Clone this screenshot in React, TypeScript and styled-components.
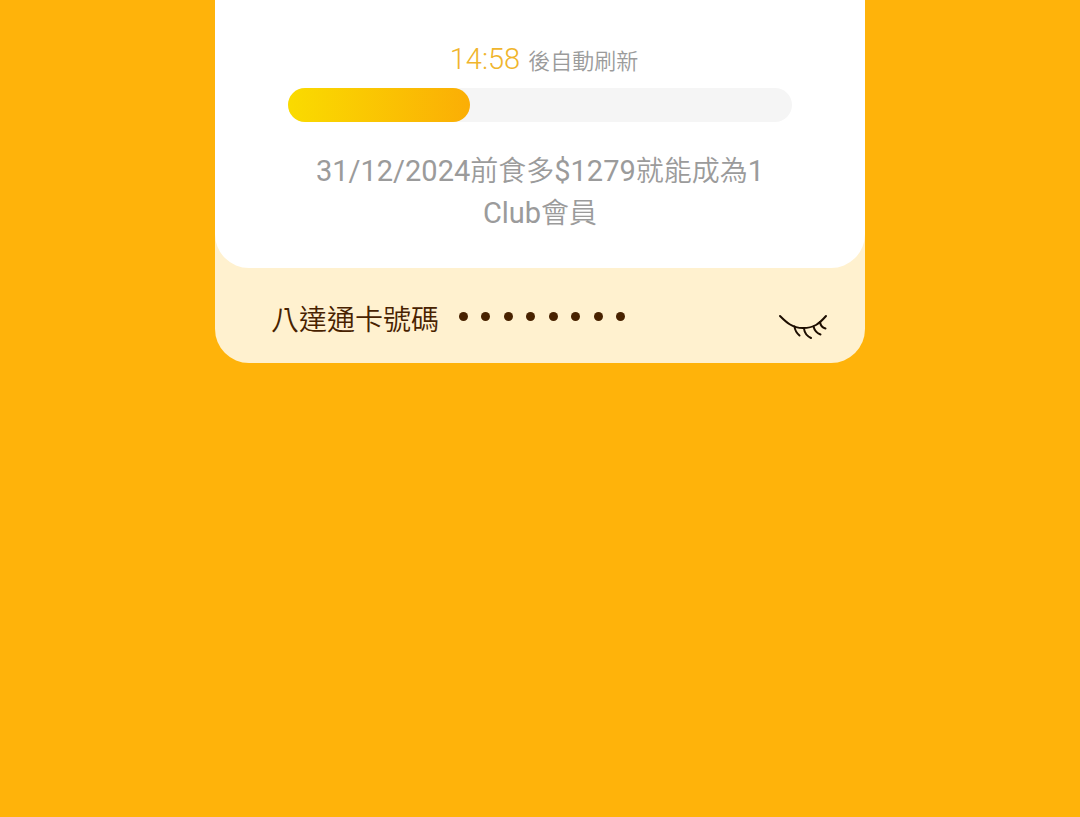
import React, { useState } from 'react';
import styled, { createGlobalStyle } from 'styled-components';

const GlobalStyle = createGlobalStyle`
  * { box-sizing: border-box; }
  body {
    margin: 0;
    background: #ffb30a;
    font-family: Roboto, "Noto Sans CJK TC", sans-serif;
    font-weight: 400;
  }
`;

const Page = styled.main`
  display: flex;
  justify-content: center;
  align-items: flex-start;
  min-height: 100vh;
`;

const Card = styled.section`
  width: 60.2%;
  min-width: 560px;
  overflow: hidden;
  background: #fff1cf;
  border-radius: 0 0 34px 34px;
`;

const Status = styled.div`
  display: flex;
  flex-direction: column;
  padding: 39px 73px 36px;
  background: #ffffff;
  border-radius: 0 0 34px 34px;
`;

const Countdown = styled.p`
  display: flex;
  justify-content: center;
  align-items: baseline;
  gap: 8px;
  margin: 0 0 9px;
  padding-left: 8px;
  line-height: 40px;
`;

const Time = styled.time`
  color: #f0b52c;
  font-size: 29px;
  font-weight: 300;
`;

const Refresh = styled.span`
  color: #9b9b9b;
  font-family: "Noto Sans CJK TC", sans-serif;
  font-size: 22px;
  font-weight: 350;
  line-height: 32px;
`;

const Track = styled.div`
  height: 34px;
  border-radius: 17px;
  background: #f5f5f5;
`;

const Fill = styled.div`
  height: 100%;
  border-radius: 17px;
  background: linear-gradient(90deg, #fadb00, #fbae05);
`;

const Notice = styled.p`
  margin: 26px 0 0;
  color: #9b9b9b;
  font-family: "Noto Sans CJK TC", sans-serif;
  font-size: 28px;
  font-weight: 350;
  line-height: 42px;
  text-align: center;
`;

const Latin = styled.span`
  font-family: Roboto, sans-serif;
  font-size: 29px;
  font-weight: 400;
  line-height: 28px;
`;

const NumberRow = styled.div`
  display: flex;
  align-items: center;
  height: 95px;
  padding: 4px 33px 0 56px;
  color: #482200;
`;

const Label = styled.span`
  font-family: "Noto Sans CJK TC", sans-serif;
  font-size: 28px;
  font-weight: 350;
  line-height: 40px;
`;

const Mask = styled.span`
  display: grid;
  grid-template-columns: repeat(8, 1fr);
  justify-items: center;
  width: 180px;
  margin: 0 auto 3px 13px;
`;

const Dot = styled.i`
  width: 9px;
  height: 9px;
  border-radius: 50%;
  background: #482200;
`;

const EyeButton = styled.button`
  display: flex;
  padding: 19px 4px 0;
  border: 0;
  background: none;
  cursor: pointer;
`;

export default function App() {
  const [progress] = useState(36.1);

  return (
    <>
      <GlobalStyle />
      <Page>
        <Card>
          <Status>
            <Countdown>
              <Time>14:58</Time>
              <Refresh>後自動刷新</Refresh>
            </Countdown>
            <Track
              role="progressbar"
              aria-label="自動刷新"
              aria-valuenow={progress}
              aria-valuemin={0}
              aria-valuemax={100}
            >
              <Fill style={{ width: `${progress}%` }} />
            </Track>
            <Notice>
              <Latin>31/12/2024</Latin>前食多<Latin>$1279</Latin>就能成為<Latin>1</Latin>
              <br />
              <Latin>Club</Latin>會員
            </Notice>
          </Status>
          <NumberRow>
            <Label>八達通卡號碼</Label>
            <Mask>
              {Array.from({ length: 8 }, (_, i) => (
                <Dot key={i} />
              ))}
            </Mask>
            <EyeButton type="button" aria-label="顯示號碼">
              <svg width="50" height="26" viewBox="0 0 50 26" fill="none" stroke="#1c0d00" strokeWidth="2" strokeLinecap="round">
                <path d="M2 2C8 8 14 14 25 14S41 10 48 2" />
                <path d="M16.500 12.500C17 17 18.500 19 21.500 21.500" />
                <path d="M26 14.500C26.500 19.500 29 22 33 24" />
                <path d="M35.500 12.500C36.500 16.500 38.500 19 42.500 20.500" />
                <path d="M42 8C42.500 11.500 44 13.500 47.500 14.500" />
              </svg>
            </EyeButton>
          </NumberRow>
        </Card>
      </Page>
    </>
  );
}
